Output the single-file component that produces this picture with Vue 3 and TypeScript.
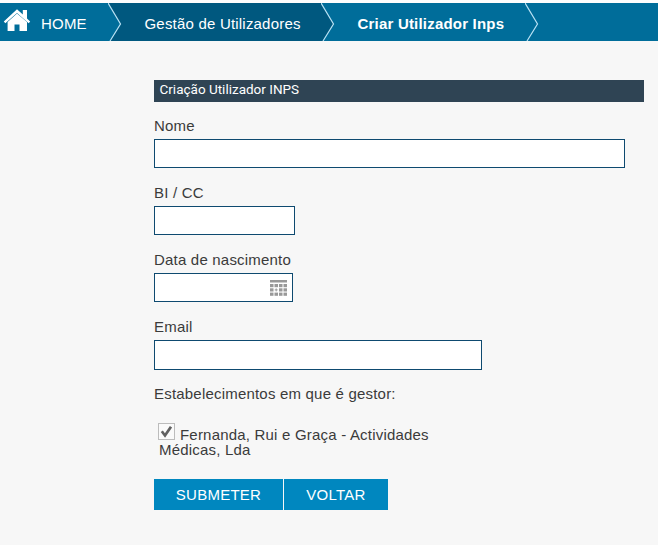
<script setup lang="ts">
import { ref } from 'vue'

interface Field {
  id: string
  label: string
  date?: boolean
}

const fields: Field[] = [
  { id: 'nome', label: 'Nome' },
  { id: 'bi', label: 'BI / CC' },
  { id: 'nascimento', label: 'Data de nascimento', date: true },
  { id: 'email', label: 'Email' },
]
const values = ref<Record<string, string>>({ nome: '', bi: '', nascimento: '', email: '' })
const manager = ref(true)
const columns = [0, 1, 2, 3]
const rows = [0, 1, 2]
</script>

<template>
  <div class="page">
    <nav class="crumbs">
      <a class="crumb home">
        <svg class="house" width="28" height="24" viewBox="0 0 28 24">
          <path d="M14 .3 .8 12.500 2.300 14.200 14 4 25.700 14.200 27.200 12.500 24 9.500V1h-4.200v4.600z" fill="#fff" />
          <path d="M14 4.600 4.600 12.900V22h6.900v-6.500h5V22H24v-9.100z" fill="#fff" />
        </svg>
        <span class="home-text">HOME</span>
      </a>
      <a class="crumb section">
        <svg class="arrow" width="14" height="38" viewBox="0 0 14 38">
          <path class="before" d="M0 0 12.500 21 2 38H0z" />
          <path class="line" d="M0 0 12.500 21 2 38" />
        </svg>
        <span class="section-text">Gestão de Utilizadores</span>
      </a>
      <a class="crumb current">
        <svg class="arrow" width="14" height="38" viewBox="0 0 14 38">
          <path class="before dark" d="M0 0 12.500 21 2 38H0z" />
          <path class="line" d="M0 0 12.500 21 2 38" />
        </svg>
        <span class="current-text">Criar Utilizador Inps</span>
      </a>
      <svg class="arrow" width="14" height="38" viewBox="0 0 14 38">
        <path class="line" d="M0 0 12.500 21 2 38" />
      </svg>
    </nav>

    <form class="form" @submit.prevent>
      <h1 class="title">Criação Utilizador INPS</h1>
      <div v-for="f in fields" :key="f.id" class="field">
        <label class="label" :for="f.id">{{ f.label }}</label>
        <div class="box" :class="f.id">
          <input :id="f.id" v-model="values[f.id]" type="text" />
          <svg v-if="f.date" class="calendar" width="17" height="16" viewBox="0 0 17 16">
            <rect width="17" height="2.500" />
            <template v-for="r in rows" :key="r">
              <template v-for="c in columns" :key="c">
                <rect v-if="r !== 1 || c !== 1" :x="c * 4.500" :y="4 + r * 4.300" width="3.500" height="3.200" />
              </template>
            </template>
            <path d="M4.700 9.900h3M6.200 8.400v3" stroke="#999" />
          </svg>
        </div>
      </div>
      <p class="subtitle">Estabelecimentos em que é gestor:</p>
      <label class="check">
        <input v-model="manager" class="native" type="checkbox" />
        <span class="tick">
          <svg v-if="manager" width="15" height="15" viewBox="0 0 15 15">
            <path d="M2.800 7.300 6 11.500 12 2.800" fill="none" stroke="#606060" stroke-width="2.700" />
          </svg>
        </span>
        <span>Fernanda, Rui e Graça - Actividades</span><br />
        <span class="second">Médicas, Lda</span>
      </label>
      <div class="actions">
        <button class="submit" type="submit">SUBMETER</button>
        <button class="back" type="button">VOLTAR</button>
      </div>
    </form>
  </div>
</template>

<style>
body {
  background: #f7f7f7;
}
</style>

<style scoped>
.page {
  box-sizing: border-box;
  width: 658px;
  height: 545px;
  overflow: hidden;
  border-top: 3px solid #fdfdfd;
  background: #f7f7f7;
  color: #3b3b3b;
  font: 15px "Liberation Sans", Arial, sans-serif;
  letter-spacing: 0.2px;
}
.crumbs {
  display: flex;
  height: 38px;
  background: #006d9a;
  color: #fff;
  line-height: 42px;
  white-space: nowrap;
}
.crumb {
  display: flex;
  box-sizing: border-box;
}
.home {
  width: 108px;
  padding-left: 3px;
}
.house {
  margin-top: 6px;
}
.home-text {
  margin-left: 10px;
}
.section {
  width: 213px;
  background: #00587f;
}
.section-text {
  margin-left: 22.5px;
}
.current {
  width: 204px;
}
.current-text {
  margin-left: 22.5px;
  font-weight: bold;
}
.arrow {
  flex: none;
}
.before {
  fill: #006d9a;
}
.dark {
  fill: #00587f;
}
.line {
  fill: none;
  stroke: #b9e2f4;
  stroke-width: 1.2;
}
.form {
  width: 490px;
  padding: 39px 0 0 154px;
}
.title {
  box-sizing: border-box;
  height: 22px;
  margin: 0 0 14px;
  padding-left: 5.5px;
  background: #2f4454;
  color: #fff;
  font: 400 13.5px/19px Roboto, sans-serif;
  letter-spacing: 0;
}
.field {
  height: 67px;
}
.label {
  display: block;
  height: 23px;
  line-height: 20px;
}
.box {
  display: flex;
  box-sizing: border-box;
  height: 29px;
  border: 1px solid #0e4a70;
  background: #fff;
}
.box input {
  flex: 1;
  min-width: 0;
  padding: 0 6px;
  border: 0;
  outline: 0;
  background: transparent;
  font: inherit;
}
.box.nome {
  width: 471px;
}
.box.bi {
  width: 141px;
}
.box.nascimento {
  width: 139px;
}
.box.email {
  width: 328px;
  height: 30px;
}
.calendar {
  margin: 6px 5px 0 0;
  fill: #999;
}
.subtitle {
  margin: 0;
  height: 39px;
  line-height: 20px;
}
.check {
  display: block;
  height: 56px;
  padding-left: 4px;
  line-height: 15px;
}
.second {
  margin-left: 1px;
}
.native {
  position: absolute;
  opacity: 0;
}
.tick {
  display: inline-block;
  box-sizing: border-box;
  width: 17px;
  height: 17px;
  margin-right: 5px;
  border: 1px solid #bcbcbc;
  background: #fafafa;
  vertical-align: 0;
}
.tick svg {
  display: block;
}
.actions {
  display: flex;
  gap: 1px;
}
.actions button {
  height: 31px;
  padding: 0;
  border: 0;
  background: #0087bf;
  color: #fff;
  font: inherit;
  letter-spacing: 0.25px;
}
.actions .submit {
  width: 129px;
}
.actions .back {
  width: 104px;
}
</style>
